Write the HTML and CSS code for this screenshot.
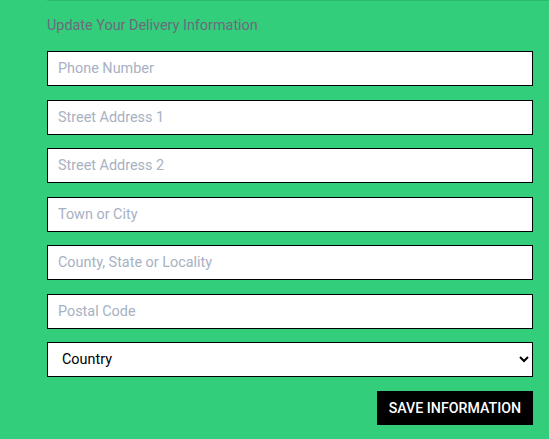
FILE: index.html
```html
<!DOCTYPE html>
<html>
<head>
<meta charset="utf-8">
<link rel="stylesheet" href="styles.css">
</head>
<body>
<div class="page">
  <div class="panel">
    <h3 class="title">Update Your Delivery Information</h3>
    <form class="form">
      <input class="field" type="text" placeholder="Phone Number">
      <input class="field" type="text" placeholder="Street Address 1">
      <input class="field" type="text" placeholder="Street Address 2">
      <input class="field" type="text" placeholder="Town or City">
      <input class="field" type="text" placeholder="County, State or Locality">
      <input class="field" type="text" placeholder="Postal Code">
      <select class="field select">
        <option>Country</option>
      </select>
      <div class="actions">
        <button type="button" class="save">SAVE INFORMATION</button>
      </div>
    </form>
  </div>
</div>
</body>
</html>
```
FILE: styles.css
```css
html, body {
  margin: 0;
  padding: 0;
  background: #32ce7b;
  font-family: Roboto, "Liberation Sans", sans-serif;
}
.page {
  padding-left: 47px;
  height: 439px;
  overflow: hidden;
}
.panel {
  border-top: 1px solid #2bbb6c;
  width: 502px;
}
.title {
  margin: 16px 0 0 0;
  font-size: 14.4px;
  font-weight: 400;
  color: #6e6a7c;
  line-height: 17px;
}
.form {
  margin-top: 17px;
  width: 486px;
  display: flex;
  flex-direction: column;
  gap: 13.5px;
}
.field {
  box-sizing: border-box;
  width: 486px;
  height: 35px;
  margin: 0;
  border: 1px solid #000;
  border-radius: 0;
  background: #fff;
  padding: 0 10px;
  font-family: Roboto, "Liberation Sans", sans-serif;
  font-size: 14.4px;
  color: #000;
  outline: none;
}
.field::placeholder {
  color: #a7b1c3;
}
.select {
  padding-left: 10px;
  color: #000;
}
.actions {
  display: flex;
  justify-content: flex-end;
  margin-top: 0;
}
.save {
  height: 34px;
  padding: 0 12px 0 11.5px;
  border: none;
  border-radius: 0;
  background: #000;
  color: #fff;
  font-family: Roboto, "Liberation Sans", sans-serif;
  font-size: 14.2px;
  font-weight: 500;
}
```
